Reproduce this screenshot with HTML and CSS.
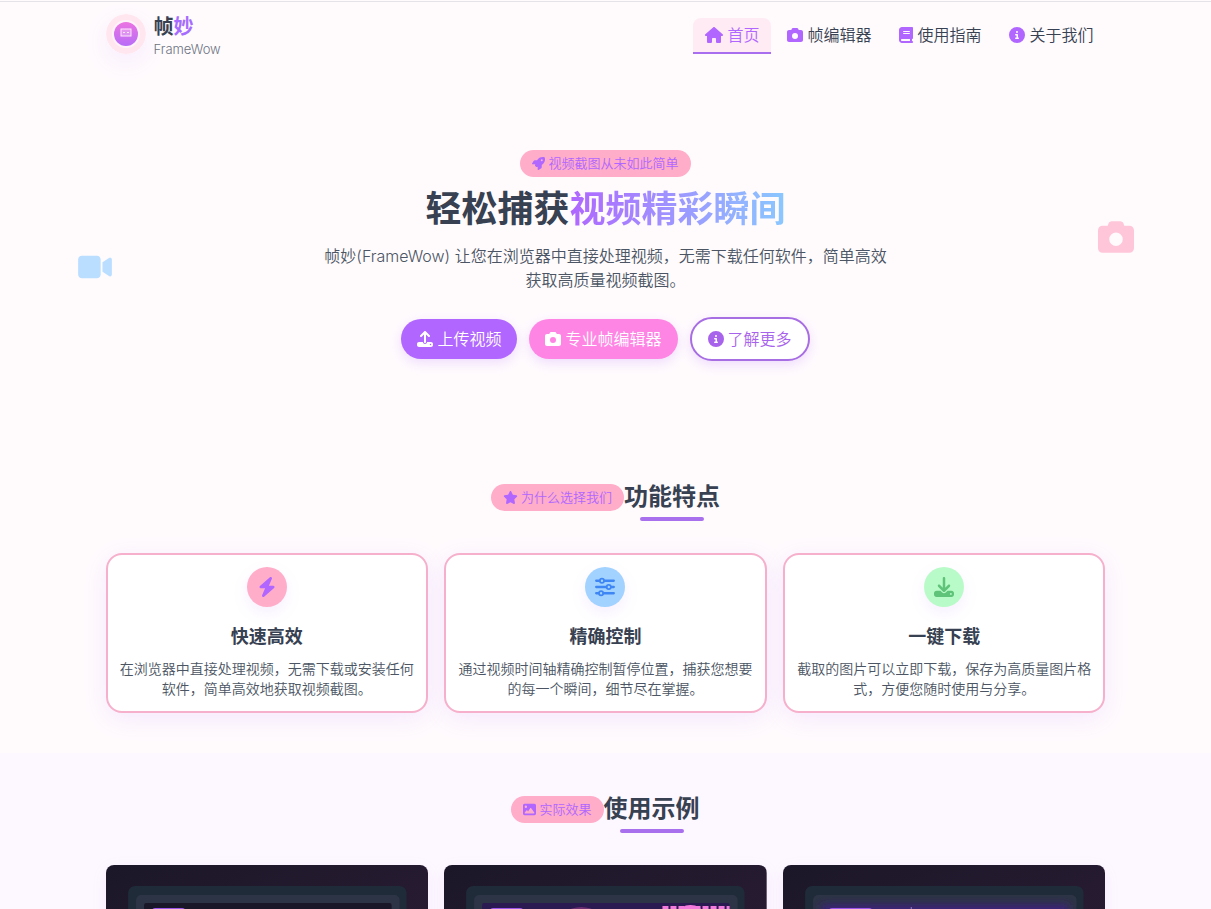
FILE: index.html
```html
<!DOCTYPE html>
<html lang="zh-CN">
<head>
    <meta charset="UTF-8">
    <meta name="viewport" content="width=device-width, initial-scale=1.0">
    <title>帧妙 FrameWow</title>
    <link rel="stylesheet" href="styles.css">
</head>
<body>
    <!-- 图标库 -->
    <svg class="icon-sprite" aria-hidden="true">
        <symbol id="i-home" viewBox="0 0 576 512"><path d="M575.8 255.5c0 18-15 32.1-32 32.1h-32l.7 160.2c0 2.7-.2 5.4-.5 8.1V472c0 22.1-17.9 40-40 40H456c-1.1 0-2.2 0-3.3-.1c-1.4 .1-2.8 .1-4.2 .1H416 392c-22.1 0-40-17.9-40-40V448 384c0-17.7-14.3-32-32-32H256c-17.7 0-32 14.3-32 32v64 24c0 22.1-17.9 40-40 40H160 128.1c-1.5 0-3-.1-4.5-.2c-1.2 .1-2.4 .2-3.6 .2H104c-22.1 0-40-17.9-40-40V360c0-.9 0-1.9 .1-2.8V287.6H32c-18 0-32-14-32-32.1c0-9 3-17 10-24L266.4 8c7-7 15-8 22-8s15 2 21 7L564.8 231.5c8 7 12 15 11 24z"/></symbol>
        <symbol id="i-camera" viewBox="0 0 512 512"><path d="M149.1 64.8L138.7 96H64C28.7 96 0 124.7 0 160V416c0 35.3 28.7 64 64 64H448c35.3 0 64-28.7 64-64V160c0-35.3-28.7-64-64-64H373.3L362.9 64.8C356.4 45.2 338.1 32 317.4 32H194.6c-20.7 0-39 13.2-45.5 32.8zM256 192a96 96 0 1 1 0 192 96 96 0 1 1 0-192z"/></symbol>
        <symbol id="i-book" viewBox="0 0 448 512"><path d="M96 0C43 0 0 43 0 96V416c0 53 43 96 96 96H384h32c17.7 0 32-14.3 32-32s-14.3-32-32-32V384c17.7 0 32-14.3 32-32V32c0-17.7-14.3-32-32-32H384 96zm0 384H352v64H96c-17.7 0-32-14.3-32-32s14.3-32 32-32zm32-240c0-8.8 7.2-16 16-16H336c8.8 0 16 7.2 16 16s-7.2 16-16 16H144c-8.8 0-16-7.2-16-16zm16 48H336c8.8 0 16 7.2 16 16s-7.2 16-16 16H144c-8.8 0-16-7.2-16-16s7.2-16 16-16z"/></symbol>
        <symbol id="i-info" viewBox="0 0 512 512"><path d="M256 512A256 256 0 1 0 256 0a256 256 0 1 0 0 512zM216 336h24V272H216c-13.3 0-24-10.7-24-24s10.7-24 24-24h48c13.3 0 24 10.7 24 24v88h8c13.3 0 24 10.7 24 24s-10.7 24-24 24H216c-13.3 0-24-10.7-24-24s10.7-24 24-24zm40-208a32 32 0 1 1 0 64 32 32 0 1 1 0-64z"/></symbol>
        <symbol id="i-rocket" viewBox="0 0 512 512"><path d="M156.6 384.9L125.7 354c-8.5-8.5-11.5-20.8-7.7-32.2c3-8.9 7-20.5 11.8-33.8L24 288c-8.6 0-16.6-4.6-20.9-12.1s-4.2-16.7 .2-24.1l52.5-88.5c13-21.9 36.5-35.3 61.9-35.3l82.3 0c2.4-4 4.8-7.7 7.2-11.3C289.1-4.1 411.1-8.1 483.9 5.3c11.6 2.1 20.6 11.2 22.8 22.8c13.4 72.9 9.3 194.8-111.4 276.7c-3.5 2.4-7.3 4.8-11.3 7.2v82.3c0 25.4-13.4 49-35.3 61.9l-88.5 52.5c-7.4 4.4-16.6 4.5-24.1 .2s-12.1-12.2-12.1-20.9V380.8c-14.1 4.9-26.4 8.9-35.7 11.9c-11.2 3.6-23.4 .5-31.8-7.8zM384 168a40 40 0 1 0 0-80 40 40 0 1 0 0 80z"/></symbol>
        <symbol id="i-upload" viewBox="0 0 512 512"><path d="M288 109.3V352c0 17.7-14.3 32-32 32s-32-14.3-32-32V109.3l-73.4 73.4c-12.5 12.5-32.8 12.5-45.3 0s-12.5-32.8 0-45.3l128-128c12.5-12.5 32.8-12.5 45.3 0l128 128c12.5 12.5 12.5 32.8 0 45.3s-32.8 12.5-45.3 0L288 109.3zM64 352H192c0 35.3 28.7 64 64 64s64-28.7 64-64H448c35.3 0 64 28.7 64 64v32c0 35.3-28.7 64-64 64H64c-35.3 0-64-28.7-64-64V416c0-35.3 28.7-64 64-64zM432 456a24 24 0 1 0 0-48 24 24 0 1 0 0 48z"/></symbol>
        <symbol id="i-download" viewBox="0 0 512 512"><path d="M288 32c0-17.7-14.3-32-32-32s-32 14.3-32 32V274.7l-73.4-73.4c-12.5-12.5-32.8-12.5-45.3 0s-12.5 32.8 0 45.3l128 128c12.5 12.5 32.8 12.5 45.3 0l128-128c12.5-12.5 12.5-32.8 0-45.3s-32.8-12.5-45.3 0L288 274.7V32zM64 352c-35.3 0-64 28.7-64 64v32c0 35.3 28.7 64 64 64H448c35.3 0 64-28.7 64-64V416c0-35.3-28.7-64-64-64H346.5l-45.3 45.3c-25 25-65.5 25-90.5 0L165.5 352H64zm368 56a24 24 0 1 1 0 48 24 24 0 1 1 0-48z"/></symbol>
        <symbol id="i-star" viewBox="0 0 576 512"><path d="M316.9 18C311.6 7 300.4 0 288.1 0s-23.4 7-28.8 18L195 150.3 51.4 171.5c-12 1.8-22 10.2-25.7 21.7s-.7 24.2 7.9 32.7L137.8 329 113.2 474.7c-2 12 3 24.2 12.9 31.3s23 8 33.8 2.3l128.3-68.5 128.3 68.5c10.8 5.7 23.9 4.9 33.8-2.3s14.9-19.3 12.9-31.3L438.5 329 542.7 225.9c8.6-8.5 11.7-21.2 7.9-32.7s-13.7-19.9-25.7-21.7L381.2 150.3 316.9 18z"/></symbol>
        <symbol id="i-bolt" viewBox="0 0 448 512"><path d="M349.4 44.6c5.9-13.7 1.5-29.7-10.6-38.5s-28.6-8-39.9 1.8l-256 224c-10 8.8-13.6 22.9-8.9 35.3S50.7 288 64 288H175.5L98.6 467.4c-5.9 13.7-1.5 29.7 10.6 38.5s28.6 8 39.9-1.8l256-224c10-8.8 13.6-22.9 8.9-35.3s-16.6-20.7-30-20.7H272.5L349.4 44.6z"/></symbol>
        <symbol id="i-sliders" viewBox="0 0 512 512"><g fill="none" stroke="currentColor" stroke-width="58" stroke-linecap="round"><path d="M30 96h88M238 96h244M30 256h262M412 256h70M30 416h66M216 416h266"/><circle cx="178" cy="96" r="54" stroke-width="44"/><circle cx="352" cy="256" r="54" stroke-width="44"/><circle cx="156" cy="416" r="54" stroke-width="44"/></g></symbol>
        <symbol id="i-image" viewBox="0 0 512 512"><path d="M0 96C0 60.7 28.7 32 64 32H448c35.3 0 64 28.7 64 64V416c0 35.3-28.7 64-64 64H64c-35.3 0-64-28.7-64-64V96zM323.8 202.5c-4.5-6.6-11.9-10.5-19.8-10.5s-15.4 3.9-19.8 10.5l-87 127.6L170.7 297c-4.6-5.7-11.5-9-18.7-9s-14.2 3.3-18.7 9l-64 80c-5.8 7.2-6.9 17.1-2.9 25.4s12.4 13.6 21.6 13.6h96 32H424c8.9 0 17.1-4.9 21.2-12.8s3.6-17.4-1.4-24.7l-120-176zM112 192a48 48 0 1 0 0-96 48 48 0 1 0 0 96z"/></symbol>
        <symbol id="i-video" viewBox="0 0 576 512"><path d="M0 128C0 92.7 28.7 64 64 64H320c35.3 0 64 28.7 64 64V384c0 35.3-28.7 64-64 64H64c-35.3 0-64-28.7-64-64V128zM559.1 99.8c10.4 5.6 16.9 16.4 16.9 28.2V384c0 11.8-6.5 22.6-16.9 28.2s-23 5-32.9-1.6l-96-64L416 337.1V320 192 174.9l14.2-9.5 96-64c9.8-6.5 22.4-7.2 32.9-1.6z"/></symbol>
        <linearGradient id="night" x1="0" y1="0" x2="1" y2="1">
            <stop offset="0" stop-color="#1b1728"/>
            <stop offset="1" stop-color="#2e1d36"/>
        </linearGradient>
        <linearGradient id="logo-fill" x1="0" y1="0" x2="0" y2="1">
            <stop offset="0" stop-color="#ec74e2"/>
            <stop offset="1" stop-color="#b76cf8"/>
        </linearGradient>
        <filter id="soft" x="-20%" y="-20%" width="140%" height="140%"><feGaussianBlur stdDeviation="4"/></filter>
    </svg>

    <header class="site-header">
        <div class="container header-inner">
            <a href="#" class="logo">
                <svg class="logo-mark" viewBox="0 0 40 40" aria-hidden="true">
                    <circle cx="20" cy="20" r="20" fill="#ffe6ef"/>
                    <circle cx="20" cy="20" r="14" fill="#fff3fa"/>
                    <circle cx="20" cy="20" r="12" fill="url(#logo-fill)"/>
                    <rect x="15" y="15" width="10" height="7" fill="#fff" fill-opacity=".25" stroke="#ffe8fb"/>
                    <path d="M17 18h2v1h-2zM21 18h2v1h-2z" fill="#ffe8fb"/>
                </svg>
                <span class="logo-text">
                    <span class="logo-name">帧<span class="logo-accent">妙</span></span>
                    <span class="logo-sub">FrameWow</span>
                </span>
            </a>
            <nav class="main-nav">
                <a href="#" class="nav-link active"><svg class="icon icon-wide"><use href="#i-home"/></svg>首页</a>
                <a href="#editor" class="nav-link"><svg class="icon"><use href="#i-camera"/></svg>帧编辑器</a>
                <a href="#guide" class="nav-link"><svg class="icon icon-narrow"><use href="#i-book"/></svg>使用指南</a>
                <a href="#about" class="nav-link"><svg class="icon"><use href="#i-info"/></svg>关于我们</a>
            </nav>
        </div>
    </header>

    <main>
        <section class="hero">
            <svg class="float-icon float-video" aria-hidden="true"><use href="#i-video"/></svg>
            <svg class="float-icon float-camera" aria-hidden="true"><use href="#i-camera"/></svg>
            <span class="badge"><svg class="icon"><use href="#i-rocket"/></svg>视频截图从未如此简单</span>
            <h1 class="hero-title">轻松捕获<span class="gradient-text">视频精彩瞬间</span></h1>
            <p class="hero-desc">帧妙(FrameWow) 让您在浏览器中直接处理视频，无需下载任何软件，简单高效获取高质量视频截图。</p>
            <div class="hero-actions">
                <button class="btn btn-primary"><svg class="icon"><use href="#i-upload"/></svg>上传视频</button>
                <a href="#editor" class="btn btn-pink"><svg class="icon"><use href="#i-camera"/></svg>专业帧编辑器</a>
                <a href="#about" class="btn btn-outline"><svg class="icon"><use href="#i-info"/></svg>了解更多</a>
            </div>
        </section>

        <section class="section">
            <div class="container">
                <div class="section-head">
                    <span class="badge"><svg class="icon icon-star"><use href="#i-star"/></svg>为什么选择我们</span>
                    <h2 class="section-title">功能特点</h2>
                </div>
                <div class="grid">
                    <div class="feature-card">
                        <div class="feature-icon pink"><svg class="icon"><use href="#i-bolt"/></svg></div>
                        <h3>快速高效</h3>
                        <p>在浏览器中直接处理视频，无需下载或安装任何软件，简单高效地获取视频截图。</p>
                    </div>
                    <div class="feature-card">
                        <div class="feature-icon blue"><svg class="icon"><use href="#i-sliders"/></svg></div>
                        <h3>精确控制</h3>
                        <p>通过视频时间轴精确控制暂停位置，捕获您想要的每一个瞬间，细节尽在掌握。</p>
                    </div>
                    <div class="feature-card">
                        <div class="feature-icon green"><svg class="icon"><use href="#i-download"/></svg></div>
                        <h3>一键下载</h3>
                        <p>截取的图片可以立即下载，保存为高质量图片格式，方便您随时使用与分享。</p>
                    </div>
                </div>
            </div>
        </section>

        <section class="section section-tint">
            <div class="container">
                <div class="section-head">
                    <span class="badge"><svg class="icon"><use href="#i-image"/></svg>实际效果</span>
                    <h2 class="section-title">使用示例</h2>
                </div>
                <div class="grid">
                    <div class="example-card">
                        <svg viewBox="0 0 322 182" aria-hidden="true">
                            <rect width="322" height="182" fill="url(#night)"/>
                            <rect x="22" y="21" width="278" height="140" rx="7" fill="#1f2b39"/>
                            <rect x="30" y="30" width="263" height="123" rx="5" fill="#2d3445"/>
                            <rect x="38" y="38" width="247" height="107" rx="2" fill="#1a1729"/>
                            <rect x="46" y="43" width="33" height="10" rx="3" fill="#9b55e8"/>
                        </svg>
                    </div>
                    <div class="example-card">
                        <svg viewBox="0 0 322 182" aria-hidden="true">
                            <rect width="322" height="182" fill="url(#night)"/>
                            <rect x="22" y="21" width="278" height="140" rx="7" fill="#1f2b39"/>
                            <rect x="30" y="30" width="263" height="123" rx="5" fill="#2d3445"/>
                            <rect x="38" y="38" width="247" height="107" rx="2" fill="#2b1a52"/>
                            <rect x="46" y="43" width="33" height="10" rx="3" fill="#9b55e8"/>
                            <ellipse cx="137" cy="62" rx="24" ry="20" fill="#6b2e70"/>
                            <path d="M218 43h67" stroke="#f47bdc" stroke-width="4" stroke-dasharray="6 2"/>
                            <ellipse cx="246" cy="48" rx="12" ry="8" fill="#f47bdc"/>
                        </svg>
                    </div>
                    <div class="example-card">
                        <svg viewBox="0 0 322 182" aria-hidden="true">
                            <rect width="322" height="182" fill="url(#night)"/>
                            <rect x="22" y="21" width="278" height="140" rx="7" fill="#1f2b39"/>
                            <rect x="30" y="30" width="263" height="123" rx="5" fill="#2d3445"/>
                            <rect x="38" y="40" width="247" height="105" fill="#3d2080" filter="url(#soft)"/>
                            <rect x="46" y="43" width="43" height="10" rx="3" fill="#9b55e8"/>
                            <path d="M128 42v12" stroke="#8f7bc4"/>
                        </svg>
                    </div>
                </div>
            </div>
        </section>
    </main>
</body>
</html>
```
FILE: styles.css
```css
* {
    box-sizing: border-box;
    margin: 0;
    padding: 0;
}

body {
    font-family: Inter, "Noto Sans CJK SC", sans-serif;
    font-size: 16px;
    line-height: 24px;
    font-weight: 350;
    color: #374151;
    background: #fffbfd;
}

a {
    color: inherit;
    text-decoration: none;
}

.icon-sprite {
    position: absolute;
    width: 0;
    height: 0;
}

.icon {
    width: 16px;
    height: 16px;
    flex-shrink: 0;
    fill: currentColor;
}

.icon-wide {
    width: 18px;
}

.icon-narrow {
    width: 14px;
}

.container {
    max-width: 1024px;
    margin: 0 auto;
    padding: 0 12px;
}

/* 顶部导航 */
.site-header {
    margin-top: 1px;
    border-top: 1px solid #e5e3e8;
}

.header-inner {
    display: flex;
    align-items: center;
    justify-content: space-between;
    height: 68px;
}

.logo {
    display: flex;
    align-items: flex-start;
    gap: 8px;
}

.logo-mark {
    width: 40px;
    height: 40px;
    border-radius: 50%;
    box-shadow: 0 8px 24px rgba(176, 102, 255, 0.1);
}

.logo-text {
    display: flex;
    flex-direction: column;
}

.logo-name {
    font-size: 20px;
    line-height: 26px;
    font-weight: 700;
}

.logo-accent {
    color: #a66cff;
}

.logo-sub {
    font-size: 13px;
    line-height: 18px;
    color: #6b7280;
}

.main-nav {
    display: flex;
    gap: 4px;
}

.nav-link {
    display: flex;
    align-items: center;
    gap: 4px;
    padding: 5px 12px;
    border-bottom: 2px solid transparent;
}

.nav-link .icon {
    color: #b066ff;
}

.nav-link.active {
    color: #b066ff;
    background: #ffebf3;
    border-bottom-color: #a96ef0;
    border-radius: 8px 8px 0 0;
}

/* 首屏 */
.hero {
    position: relative;
    display: flex;
    flex-direction: column;
    align-items: center;
    padding: 80px 12px;
    text-align: center;
}

.float-icon {
    position: absolute;
}

.float-video {
    top: 182px;
    left: 78px;
    width: 34px;
    height: 30px;
    fill: #badeff;
}

.float-camera {
    top: 149px;
    right: 77px;
    width: 36px;
    height: 36px;
    fill: #ffc6d9;
}

.badge {
    display: inline-flex;
    align-items: center;
    gap: 3px;
    padding: 4px 12px;
    font-size: 13px;
    line-height: 19px;
    color: #b066ff;
    background: #ffadc9;
    border-radius: 14px;
}

.badge .icon {
    width: 13px;
    height: 13px;
}

.badge .icon-star {
    width: 15px;
}

.hero-title {
    margin-top: 10px;
    font-size: 36px;
    line-height: 44px;
    font-weight: 700;
}

.gradient-text {
    color: transparent;
    background: linear-gradient(90deg, #b066ff, #8ac8ff);
    -webkit-background-clip: text;
    background-clip: text;
}

.hero-desc {
    max-width: 576px;
    margin-top: 13px;
    color: #4b5563;
}

.hero-actions {
    display: flex;
    align-items: center;
    gap: 12px;
    margin-top: 25px;
}

.btn {
    display: flex;
    align-items: center;
    gap: 4px;
    padding: 8px 16px;
    font: inherit;
    color: #fff;
    border: none;
    border-radius: 22px;
    box-shadow: 0 4px 12px rgba(176, 102, 255, 0.2);
    cursor: pointer;
}

.btn-primary {
    background: #b066ff;
}

.btn-pink {
    background: #ff85e4;
}

.btn-outline {
    color: #a863ec;
    background: #fff;
    border: 2px solid #a76de3;
}

/* 内容区块 */
.section {
    padding: 40px 0;
}

.section-tint {
    background: #fdf8ff;
}

.section-head {
    display: flex;
    align-items: center;
    justify-content: center;
    margin-bottom: 40px;
}

.section-title {
    position: relative;
    font-size: 24px;
    line-height: 32px;
    font-weight: 700;
}

.section-title::after {
    content: "";
    position: absolute;
    left: 16px;
    right: 16px;
    bottom: -8px;
    height: 4px;
    background: #a970ee;
    border-radius: 2px;
}

.grid {
    display: grid;
    grid-template-columns: repeat(3, 1fr);
    gap: 16px;
}

.feature-card {
    padding: 12px;
    text-align: center;
    background: #fff;
    border: 2px solid #f6b0cb;
    border-radius: 16px;
    box-shadow: 0 6px 24px rgba(176, 102, 255, 0.12);
}

.feature-icon {
    display: flex;
    align-items: center;
    justify-content: center;
    width: 40px;
    height: 40px;
    margin: 0 auto 16px;
    border-radius: 50%;
    box-shadow: 0 6px 16px rgba(176, 102, 255, 0.1);
}

.feature-icon .icon {
    width: 20px;
    height: 20px;
}

.feature-icon.pink {
    color: #b066ff;
    background: #ffadc9;
}

.feature-icon.blue {
    color: #3f86f5;
    background: #a2d2ff;
}

.feature-icon.green {
    color: #5fc47a;
    background: #b9fbc8;
}

.feature-card h3 {
    margin-bottom: 8px;
    font-size: 18px;
    line-height: 28px;
}

.feature-card p {
    font-size: 14px;
    line-height: 20px;
    color: #4b5563;
}

.example-card {
    overflow: hidden;
    border-radius: 8px;
    box-shadow: 0 4px 16px rgba(176, 102, 255, 0.08);
}

.example-card svg {
    display: block;
    width: 100%;
}
```
